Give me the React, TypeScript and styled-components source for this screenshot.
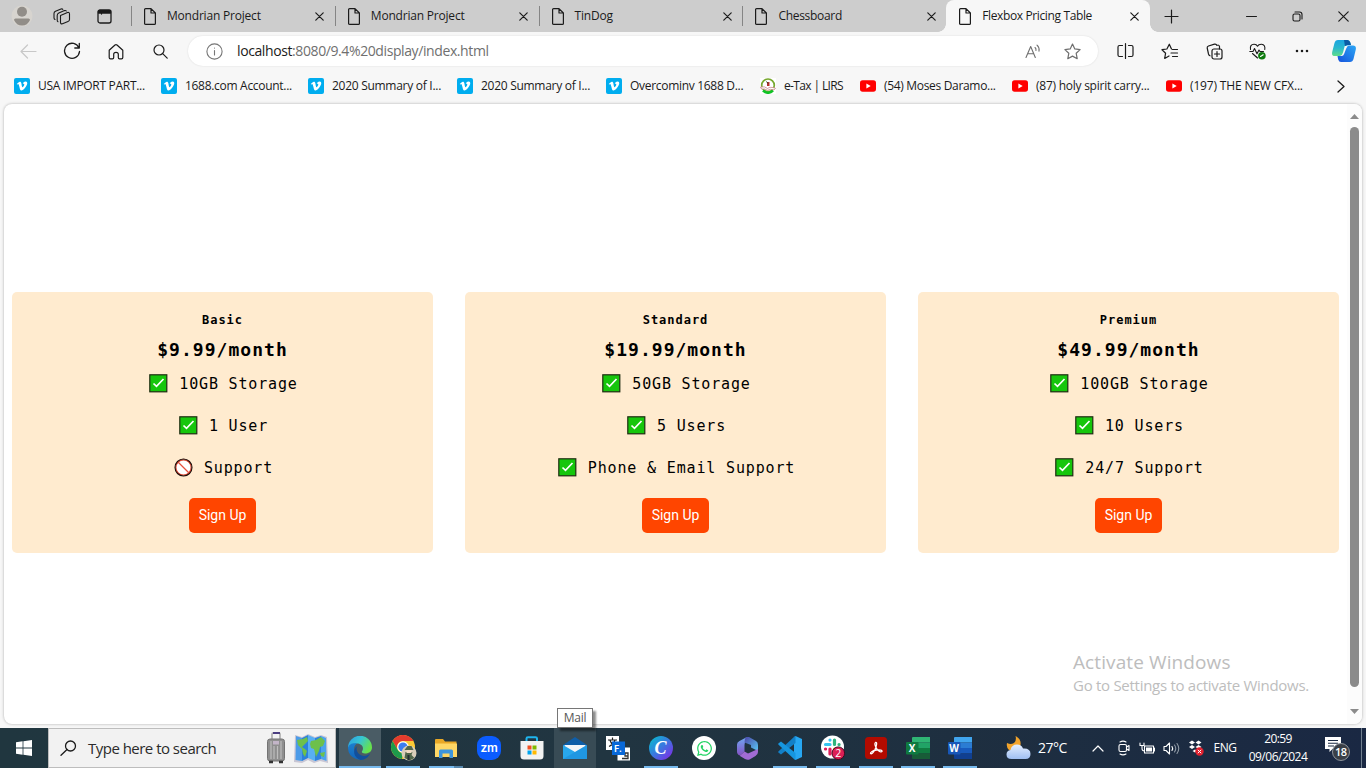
import React from "react";
import styled, { createGlobalStyle, css } from "styled-components";
import { FaVimeoV, FaWhatsapp } from "react-icons/fa";

const ui = `"Open Sans", "Noto Sans", sans-serif`;
const mono = `"DejaVu Sans Mono", "Liberation Mono", monospace`;

const GlobalStyle = createGlobalStyle`
  * { box-sizing: border-box; }
  body { margin: 0; background: #f7f7f7; font-family: ${ui}; color: #1b1b1b; overflow: hidden; }
  svg { display: block; flex: none; }
`;

const Desktop = styled.div`
  width: 1366px;
  height: 768px;
  display: flex;
  flex-direction: column;
  position: relative;
  overflow: hidden;
`;

const Label = styled.span<{ $size?: number; $track?: number; $color?: string; $lh?: number }>`
  font-size: ${(p) => p.$size ?? 12}px;
  letter-spacing: ${(p) => p.$track ?? -0.3}px;
  color: ${(p) => p.$color ?? "#1b1b1b"};
  white-space: nowrap;
  line-height: ${(p) => p.$lh ?? 18}px;
`;

const Cell = styled.div<{ $w: number }>`
  width: ${(p) => p.$w}px;
  flex: none;
  display: flex;
  align-items: center;
  justify-content: center;
`;

/* ---------- tab strip ---------- */

const TabStrip = styled.div`
  height: 32px;
  flex: none;
  display: flex;
  background: #cdcdcd;
`;

const StripLead = styled.div`
  width: 131px;
  display: flex;
  align-items: center;
  padding-left: 2px;
`;

const activeTab = css`
  background: #f7f7f7;
  border-radius: 8px 8px 0 0;
  &::before, &::after {
    content: "";
    position: absolute;
    bottom: 0;
    width: 8px;
    height: 8px;
  }
  &::before { left: -8px; background: radial-gradient(circle at 0 0, transparent 7.5px, #f7f7f7 8px); }
  &::after { right: -8px; background: radial-gradient(circle at 100% 0, transparent 7.5px, #f7f7f7 8px); }
`;

const TabBox = styled.div<{ $active?: boolean }>`
  width: 203.8px;
  position: relative;
  display: flex;
  align-items: center;
  padding: 0 8px 0 13px;
  ${(p) => p.$active && activeTab}
`;

const TabDivider = styled.i`
  position: absolute;
  left: 0;
  top: 6px;
  width: 1px;
  height: 20px;
  background: #858585;
`;

const TabTitle = styled(Label)`
  flex: 1;
  padding-left: 11px;
`;

const WindowControls = styled.div`
  margin-left: auto;
  display: flex;
`;

/* ---------- toolbar ---------- */

const Toolbar = styled.div`
  height: 38px;
  flex: none;
  display: flex;
  align-items: center;
  padding-left: 6px;
  background: #f7f7f7;
`;

const AddressBar = styled.div`
  width: 910px;
  height: 30px;
  margin: 0 5px 0 6px;
  border-radius: 15px;
  background: #fff;
  box-shadow: 0 0 2px rgba(0, 0, 0, 0.12);
  display: flex;
  align-items: center;
  padding: 0 4px 0 18px;
`;

const Url = styled(Label)`
  flex: 1;
  padding-left: 14px;
  b { font-weight: 400; color: #1b1b1b; }
`;

/* ---------- bookmarks ---------- */

const Bookmarks = styled.div`
  height: 32px;
  flex: none;
  display: flex;
  align-items: center;
  padding-left: 14px;
  background: #f7f7f7;
`;

const Bookmark = styled.div<{ $w: number }>`
  width: ${(p) => p.$w}px;
  display: flex;
  align-items: center;
  gap: 8px;
`;

const VimeoTile = styled.div`
  width: 16px;
  height: 16px;
  border-radius: 2px;
  background: #00adef;
  display: grid;
  place-items: center;
`;

/* ---------- page ---------- */

const Viewport = styled.div`
  height: 626px;
  flex: none;
  padding: 2px 4px 4px;
  background: #f7f7f7;
`;

const PageFrame = styled.div`
  height: 620px;
  border-radius: 8px;
  background: #fff;
  box-shadow: 0 0 3px rgba(0, 0, 0, 0.3);
  display: flex;
  overflow: hidden;
`;

const PricingContainer = styled.main`
  width: 1343px;
  padding: 17px 8px 0;
  display: flex;
  gap: 32px;
  align-items: center;
`;

const PlanCard = styled.section`
  flex: 1;
  height: 261px;
  padding: 20px;
  border-radius: 5px;
  background: #ffebcf;
  display: flex;
  flex-direction: column;
  align-items: center;
  font-family: ${mono};
  color: #000;
`;

const PlanTitle = styled.h2`
  margin: 0;
  font-size: 12px;
  line-height: 16px;
  letter-spacing: 0.97px;
`;

const PlanPrice = styled.h3`
  margin: 10px 0 10px;
  font-size: 18px;
  line-height: 24px;
  letter-spacing: 1.03px;
`;

const Features = styled.ul`
  list-style: none;
  margin: 0;
  padding: 0 0 0 2px;
  display: flex;
  flex-direction: column;
  gap: 20px;
  align-items: center;
`;

const Feature = styled.li`
  display: flex;
  align-items: center;
  gap: 11px;
  height: 22px;
  font-size: 15px;
  line-height: 20px;
  letter-spacing: 0.84px;
  white-space: nowrap;
  span { padding-top: 2px; }
`;

const SignUp = styled.button`
  margin-top: 20px;
  width: 67px;
  height: 35px;
  flex: none;
  padding: 0;
  border: 0;
  border-radius: 5px;
  background: #ff4500;
  color: #fff;
  font: 400 14px/35px Roboto, "Liberation Sans", sans-serif;
`;

const Scrollbar = styled.div`
  width: 15px;
  background: #fcfcfc;
  display: flex;
  flex-direction: column;
  align-items: center;
  padding: 10px 1px 10px 0;
`;

const Thumb = styled.div`
  width: 9px;
  height: 560px;
  margin: 8px 0 22px;
  flex: none;
  border-radius: 5px;
  background: #8b8b8b;
`;

const Watermark = styled.div`
  position: absolute;
  left: 1073px;
  top: 649px;
  display: flex;
  flex-direction: column;
`;

const MailTip = styled.div`
  position: absolute;
  left: 557px;
  top: 708px;
  width: 36px;
  height: 20px;
  border: 1px solid #767676;
  background: #fff;
  box-shadow: 3px 3px 2px rgba(0, 0, 0, 0.45);
  display: grid;
  place-items: center;
`;

/* ---------- taskbar ---------- */

const Taskbar = styled.div`
  height: 40px;
  flex: none;
  display: flex;
  background: linear-gradient(90deg, #20363f 0%, #213541 45%, #1e2f40 70%, #1a2843 100%);
`;

const SearchBox = styled.div`
  width: 288px;
  height: 40px;
  border: 1px solid #bdbdbd;
  background: #f2f2f2;
  display: flex;
  align-items: center;
  padding: 0 7px 0 11px;
`;

const SearchText = styled(Label)`
  flex: 1;
  padding-left: 11px;
`;

const Apps = styled.div`
  display: flex;
  padding-left: 3px;
`;

const AppButton = styled.div<{ $bg?: string; $line?: "full" | "open" | "split"; $w?: number }>`
  width: ${(p) => p.$w ?? 43}px;
  height: 40px;
  display: flex;
  align-items: center;
  justify-content: center;
  background: ${(p) => p.$bg ?? "transparent"};
  background-clip: content-box;
  padding-right: 1px;
  position: relative;
  ${(p) =>
    p.$line &&
    css`
      &::after {
        content: "";
        position: absolute;
        bottom: 0;
        left: ${p.$line === "full" ? 0 : 4}px;
        width: ${p.$line === "full" ? 42 : 34}px;
        height: 2px;
        background: ${p.$line === "split" ? "linear-gradient(90deg,#76b9ed 25px,#5788ad 25px)" : "#76b9ed"};
      }
    `}
`;

const Tray = styled.div`
  margin-left: auto;
  width: 366px;
  display: flex;
  align-items: center;
`;

const Clock = styled.div`
  width: 84px;
  display: flex;
  flex-direction: column;
  align-items: center;
`;

const ShowDesktop = styled.div`
  margin-left: auto;
  width: 5px;
  height: 40px;
  border-left: 1px solid #71808f;
`;

/* ---------- line icons ---------- */

type LineProps = { w: number; h?: number; color?: string; sw?: number; children: React.ReactNode };

const Line = ({ w, h = w, color = "#1b1b1b", sw = 1.2, children }: LineProps) => (
  <svg width={w} height={h} viewBox={`0 0 ${w} ${h}`} fill="none" stroke={color} strokeWidth={sw} strokeLinecap="round" strokeLinejoin="round">
    {children}
  </svg>
);

const CloseMark = ({ size = 9 }: { size?: number }) => (
  <Line w={size}><path d={`M.8.8 ${size - 0.8} ${size - 0.8}M${size - 0.8}.8.8 ${size - 0.8}`} /></Line>
);

const PageIcon = () => (
  <Line w={12} h={17} sw={1.2}>
    <path d="M.6 1.600Q.6.6 1.600.6H7L11.400 5V15.400Q11.400 16.400 10.400 16.400H1.600Q.6 16.400.6 15.400ZM7 .6V5H11.400" />
  </Line>
);

const Avatar = () => (
  <svg width="22" height="22" viewBox="0 0 22 22">
    <circle cx="11" cy="11" r="10.5" fill="#d7d4cf" />
    <circle cx="11" cy="6.800" r="5" fill="#918d88" />
    <path d="M3 15Q3 13.500 4.500 13.500H17.500Q19 13.500 19 15Q16.500 20.500 11 20.500T3 15" fill="#918d88" />
  </svg>
);

const WorkspacesIcon = () => (
  <Line w={18} h={17} sw={1.1}>
    <path d="M7.500 7.500 14.500 4.500Q16.500 4 16.500 6V11.500Q16.500 13 15 13.500L9.500 15.800Q7.500 16.300 7.500 14.500V8.500ZM5 13.800Q4.200 13.500 4.200 12V7.500Q4.200 5.800 5.800 5L11.500 2.600Q12.800 2.200 13.300 3M2 11.500Q1 11 1 9.700V5.500Q1 4 2.500 3.300L8 1Q9.300.7 9.800 1.300" />
  </Line>
);

const TabActionsIcon = () => (
  <Line w={15} h={15} sw={1.3}>
    <rect x="1" y="1" width="13" height="13" rx="2" />
    <path d="M1.500 1.700H13.500V4H1.500ZM4.500 4V5" fill="#1b1b1b" />
  </Line>
);

const BackIcon = () => (
  <Line w={17} h={15} color="#c8c8c8"><path d="M16 7.500H1.200M7.500 1 1 7.500 7.500 14" /></Line>
);

const ReloadIcon = () => (
  <Line w={18} sw={1.3}>
    <path d="M16 6A7.500 7.500 0 1 0 16.500 9.500M16.300 1.500V6H11.800" />
  </Line>
);

const HomeIcon = () => (
  <Line w={16} h={17} sw={1.2}>
    <path d="M1.200 7.300 7 2Q8 1.200 9 2L14.800 7.300V14.500Q14.800 15.800 13.500 15.800H11.500Q10.300 15.800 10.300 14.500V11.300Q10.300 9.300 8 9.300T5.700 11.300V14.500Q5.700 15.800 4.500 15.800H2.500Q1.200 15.800 1.200 14.500Z" />
  </Line>
);

const SearchIcon = () => (
  <Line w={15} sw={1.2}><circle cx="6" cy="6" r="5" /><path d="M9.700 9.700 14.200 14.200" /></Line>
);

const InfoIcon = () => (
  <Line w={17} color="#767676" sw={1.1}>
    <circle cx="8.500" cy="8.500" r="7.600" /><path d="M8.500 7.500V12M8.500 5V5.100" />
  </Line>
);

const ReadAloudIcon = () => (
  <Line w={17} h={15} color="#6f6f6f" sw={1.1}>
    <path d="M1 13.500 5.700 2.500 10.300 13.500M2.700 9.800H8.700M10 3.500Q11.300 4.600 11 6.500M12 1.200Q14.700 3.500 14 7.200" />
  </Line>
);

const StarIcon = () => (
  <Line w={17} h={17} color="#6f6f6f" sw={1.2}>
    <path d="M8.500 1 10.800 5.900 16.100 6.600 12.200 10.300 13.200 15.700 8.500 13.100 3.800 15.700 4.800 10.300.9 6.600 6.200 5.900Z" />
  </Line>
);

const SplitIcon = () => (
  <Line w={17} h={16} sw={1.2}>
    <path d="M8.500 .6V15.400M5.500 2.500H2.500Q1 2.500 1 4V12Q1 13.500 2.500 13.500H5.500M11.500 2.500H14.500Q16 2.500 16 4V12Q16 13.500 14.500 13.500H11.500" />
  </Line>
);

const FavoritesIcon = () => (
  <Line w={18} h={17} sw={1.2}>
    <path d="M10.500 6 8.300 1.200 5.900 6 1 6.700 4.600 10.200 3.700 15.400 8 13M11.500 6.500H16.500M10 10H16.500M11.500 13.500H16.500" />
  </Line>
);

const CollectionsIcon = () => (
  <Line w={17} h={17} sw={1.2}>
    <rect x="6" y="6" width="10" height="10" rx="2" />
    <path d="M11 8.500V13.500M8.500 11H13.500M13.500 6V3.500Q13.300 2.300 12 2M4 12.800Q3 12.500 2.500 11L1.200 5Q1 3.500 2.500 3L8.500 1.100Q10.300.7 11 2.500" />
  </Line>
);

const EssentialsIcon = () => (
  <Line w={18} h={17} sw={1.1}>
    <path d="M8.500 15 7 13.500M1.500 6.500Q.7 1.500 5 1.200 7.500 1.100 8.500 3.200 9.500 1.100 12.500 1.200 16.500 1.700 15.800 6.500M.8 8.500H4L5.500 5.500 8 10.800 10 7 11 8.500H14.500M3.500 10.500 8.500 15" />
    <circle cx="12.900" cy="12.800" r="3.800" fill="#107c10" stroke="none" />
    <path d="M11.500 13.500 14.200 11.800" stroke="#fff" />
  </Line>
);

const CopilotIcon = () => (
  <svg width="24" height="22" viewBox="0 0 24 22">
    <defs>
      <linearGradient id="cpl" x1="0" y1="0" x2="0" y2="1"><stop stopColor="#1ba4e0" /><stop offset=".5" stopColor="#2ab7cd" /><stop offset="1" stopColor="#5fdc8a" /></linearGradient>
      <linearGradient id="cpr" x1="1" y1="0" x2="0" y2="1"><stop stopColor="#2ba7f5" /><stop offset="1" stopColor="#1652dc" /></linearGradient>
    </defs>
    <path d="M6 0H15.500Q17.500 0 18.300 2.500L19 5H16Q14 5 13.300 7.500L11.500 13.500Q10.700 16 8 16H3Q-.7 16 .2 12L2.500 3Q3.300 0 6 0Z" fill="url(#cpl)" />
    <path d="M12 0H15.500Q17.500 0 18.300 2.500L19 5H15.500Q13.500 5 13 6.500Z" fill="#0b5aa5" />
    <path d="M18 22H9Q7 22 6.200 19.500L5.500 16H8Q10.500 16 11.300 13.500L13 8Q13.800 5.500 16 5.500H21Q24.500 5.500 23.800 9.500L21.500 19Q20.700 22 18 22Z" fill="url(#cpr)" />
    <path d="M12.700 6H15.700Q14.500 7.500 13.800 9.500L12.300 13.500Q11.700 15.500 10 16H8Q10.500 15 11 12.500Z" fill="#f7f7f7" />
  </svg>
);

const YoutubeIcon = () => (
  <svg width="16" height="16" viewBox="0 0 16 16">
    <rect x="0" y="2.300" width="16" height="11.400" rx="2.600" fill="#f00" />
    <path d="M6.400 5.600 10.700 8 6.400 10.400Z" fill="#fff" />
  </svg>
);

const LirsIcon = () => (
  <svg width="16" height="16" viewBox="0 0 16 16">
    <rect width="16" height="16" fill="#fff" />
    <circle cx="8" cy="7.300" r="6.300" fill="#fff" stroke="#77a82e" strokeWidth="1.700" />
    <path d="M3 12.500Q8 17 13 12.500" stroke="#10c226" strokeWidth="2.500" fill="none" />
    <path d="M.5 9Q5 8 7.500 10.500 10 8.300 15.500 10.300L14 12Q10 10.500 7.500 12.300 5 10.500 1.500 11Z" fill="#fff" stroke="#c2757b" strokeWidth=".7" />
    <path d="M7 4H9.500V8H7Z" fill="#b8322c" /><path d="M6.500 3.500 8 5.500" stroke="#242" />
  </svg>
);

/* ---------- plan marks ---------- */

const CheckMark = () => (
  <svg width="19" height="19" viewBox="0 0 19 19">
    <rect x=".8" y=".8" width="17" height="17" fill="#16c60c" stroke="#1f2c12" strokeWidth="1.200" />
    <path d="M4.500 9.500 7.500 12.400 14.500 5" fill="none" stroke="#fff" strokeWidth="1.700" />
  </svg>
);

const NoMark = () => (
  <svg width="19" height="19" viewBox="0 0 19 19">
    <circle cx="9.500" cy="9.500" r="7.700" fill="#fff" stroke="#d8412c" strokeWidth="1.300" />
    <circle cx="9.500" cy="9.500" r="8.500" fill="none" stroke="#1b0d0a" strokeWidth="1.100" />
    <path d="M4 4 15 15" stroke="#e8503c" strokeWidth="1.300" />
  </svg>
);

/* ---------- taskbar icons ---------- */

const WindowsIcon = () => (
  <svg width="16" height="16" viewBox="0 0 16 16" fill="#fff">
    <path d="M0 2.200 6.600 1.300V7.600H0ZM7.400 1.200 16 0V7.600H7.400ZM0 8.400H6.600V14.700L0 13.800ZM7.400 8.400H16V16L7.400 14.800Z" />
  </svg>
);

const LuggageIcon = () => (
  <svg width="18" height="32" viewBox="0 0 18 32">
    <path d="M5 8V2Q5 1 6 1H12Q13 1 13 2V8" fill="none" stroke="#a7a7a7" strokeWidth="1.500" />
    <path d="M6 1H13" stroke="#4b3d80" strokeWidth="2" />
    <rect x=".5" y="7" width="17" height="22" rx="2.500" fill="#8f8f8f" stroke="#747474" />
    <path d="M4 9V27M7 14V27M10.500 14V27M14 9V27" stroke="#bdbdbd" strokeWidth="1.200" />
    <rect x="6" y="9" width="6" height="3.500" fill="#c3b5c8" />
    <path d="M2 30H6M12 30H16" stroke="#333" strokeWidth="2.500" />
  </svg>
);

const MapIcon = () => (
  <svg width="34" height="31" viewBox="0 0 34 31">
    <path d="M1 2 8 4 14 1 21 4 27 2 33 4 34 30 26 28 20 30 14 27 8 30 0 29Z" fill="#c8c6d4" />
    <path d="M2 3 8 5V28L1.500 27Z" fill="#4b9be8" /><path d="M8 5 14 2V25L8 28Z" fill="#2c81dc" />
    <path d="M14 2 21 5V28L14 25Z" fill="#58b0f2" /><path d="M21 5 27 3V26L21 28Z" fill="#2f83dd" /><path d="M27 3 32 5 32.500 28 27 26Z" fill="#4ba3ee" />
    <path d="M3 7 9 6 13 4 14 8 11 11 8 14 11 16 13 18 11 24 9 21 8 16 4 12ZM17 8 22 7 27 4 31 8 29 13 26 14 25 18 22 24 20 16 17 15 16 11ZM26 20 31 19 30 24 27 23Z" fill="#6dc04b" />
  </svg>
);

const EdgeIcon = () => (
  <svg width="24" height="24" viewBox="0 0 24 24">
    <defs>
      <linearGradient id="eg1" x1="0" y1="0" x2="1" y2=".5"><stop stopColor="#2c9be4" /><stop offset=".5" stopColor="#36c4d4" /><stop offset="1" stopColor="#67e24c" /></linearGradient>
      <linearGradient id="eg2" x1="0" y1="0" x2="0" y2="1"><stop stopColor="#1b7fd0" /><stop offset="1" stopColor="#1266b9" /></linearGradient>
    </defs>
    <path d="M0 12A12 12 0 0 1 24 11.500C24 16 20 17.500 17 17.500 14.500 17.500 13.500 16.300 14 15.300 16.500 12 14 7.500 9 7.500 4 7.500 1 10.500 0 12Z" fill="url(#eg1)" />
    <path d="M0 12C.5 7.500 6 6.500 9 7.500 6.500 9 5.500 12 6.500 15 8 19.500 13 22 18 21L20.500 20A12 12 0 0 1 0 12Z" fill="url(#eg2)" />
    <path d="M9.500 10C7.500 12 8.500 17 13 19.300 16.500 20.800 19.500 19.500 22 17.500 21 20.500 17 24 12.500 24 5.500 21.500 4 13.500 9.500 10Z" fill="#124f9b" />
  </svg>
);

const ChromeIcon = () => (
  <svg width="27" height="26" viewBox="0 0 27 26">
    <circle cx="13" cy="12" r="12" fill="#fcc934" />
    <path d="M2.600 6A12 12 0 0 1 23.400 6H13A6 6 0 0 0 7.800 15Z" fill="#e33b2e" />
    <path d="M2.600 6 7.800 15A6 6 0 0 0 13 18L12 24A12 12 0 0 1 2.600 6" fill="#1e9a4b" />
    <circle cx="13" cy="12" r="5.800" fill="#fff" /><circle cx="13" cy="12" r="4.600" fill="#3c7df0" />
    <circle cx="19" cy="18" r="7.500" fill="#d8cdb9" />
    <path d="M14.500 15 17.500 11H21.500L23.500 15ZM15.500 17H22.500L21.500 20 24.500 23 19.500 25.500 14.500 23Z" fill="#50664a" />
    <path d="M16.500 15H21.500V18H16.500Z" fill="#f0d9c2" /><path d="M17.500 20H19.500V25H17.500Z" fill="#222f35" />
  </svg>
);

const FolderIcon = () => (
  <svg width="22" height="19" viewBox="0 0 22 19">
    <path d="M0 1Q0 0 1 0H8L10 2.500H21.500V18H0Z" fill="#e9a826" /><path d="M0 4.500H22V18H0Z" fill="#ffd765" />
    <path d="M4 19V12Q4 10.500 5.500 10.500H16.500Q18 10.500 18 12V19H14.500V14.500H7.500V19Z" fill="#3d95dc" />
  </svg>
);

const ZoomIcon = () => (
  <svg width="24" height="24" viewBox="0 0 24 24">
    <rect width="24" height="24" rx="9" fill="#0b5cff" />
    <text x="12" y="15.700" textAnchor="middle" fontFamily="Inter" fontWeight="600" fontSize="12" letterSpacing="-.2" fill="#fff">zm</text>
  </svg>
);

const StoreIcon = () => (
  <svg width="24" height="24" viewBox="0 0 24 24">
    <path d="M6.500 6V2.500Q6.500 1.200 8 1.200H15.500Q17 1.200 17 2.500V6" fill="none" stroke="#1fb5ee" strokeWidth="2" />
    <path d="M.5 5H23.500V20Q23.500 23.500 20 23.500H4Q.5 23.500.5 20Z" fill="#f2f2f2" />
    <path d="M7.500 9.500H11.500V13.500H7.500Z" fill="#f25022" /><path d="M12.500 9.500H16.500V13.500H12.500Z" fill="#7fba00" />
    <path d="M7.500 14.500H11.500V18.500H7.500Z" fill="#00a4ef" /><path d="M12.500 14.500H16.500V18.500H12.500Z" fill="#ffb900" />
  </svg>
);

const MailIcon = () => (
  <svg width="24" height="22" viewBox="0 0 24 22">
    <path d="M0 8 12 0 24 8V12H0Z" fill="#0f5ea8" /><path d="M1.500 8H22.500V14L12 18 1.500 14Z" fill="#f4f6f8" />
    <path d="M0 8 12 15 24 8V22H0Z" fill="#29a7ec" /><path d="M0 22 24 8V22Z" fill="#1685d8" opacity=".45" />
  </svg>
);

const TranslateIcon = () => (
  <svg width="24" height="25" viewBox="0 0 24 25">
    <rect width="13" height="14" fill="#fff" /><path d="M2 4H11M6.500 1.500V4M9 4Q8 8 3 10.500M4 4Q5 8 9 9.500" stroke="#222" strokeWidth="1.200" fill="none" />
    <rect x="11.500" y="11.500" width="12.500" height="13" fill="#fff" /><path d="M17 17H22V22.500H16M19 17V20H22" stroke="#333" fill="none" strokeWidth="1.300" />
    <rect x="6" y="5.500" width="13" height="13.500" fill="#0868d8" />
    <text x="12" y="15.500" fontFamily="Inter" fontWeight="700" fontSize="8.500" fill="#fff" textAnchor="middle">F.</text>
  </svg>
);

const CanvaIcon = () => (
  <svg width="24" height="24" viewBox="0 0 24 24">
    <defs><linearGradient id="cv" x1="0" y1="0" x2="1" y2="1"><stop stopColor="#00c4cc" /><stop offset=".5" stopColor="#3b76e0" /><stop offset="1" stopColor="#8a20e6" /></linearGradient></defs>
    <circle cx="12" cy="12" r="12" fill="url(#cv)" />
    <text x="11.500" y="18" textAnchor="middle" fontFamily="Liberation Serif" fontStyle="italic" fontWeight="700" fontSize="18" fill="#fff">C</text>
  </svg>
);

const WhatsappTile = styled.div`
  width: 24px;
  height: 24px;
  border-radius: 50%;
  background: #fff;
  display: grid;
  place-items: center;
`;

const M365Icon = () => (
  <svg width="21" height="23" viewBox="0 0 21 23">
    <defs>
      <linearGradient id="m1" x1="0" y1="0" x2="0" y2="1"><stop stopColor="#6fa9f2" /><stop offset="1" stopColor="#8652c5" /></linearGradient>
      <linearGradient id="m2" x1="0" y1="0" x2="1" y2="1"><stop stopColor="#4c46a8" /><stop offset="1" stopColor="#5ac8f4" /></linearGradient>
    </defs>
    <path d="M10 0 12.500 1.500Q7.500 3.500 7.500 8V14.500L3 18.500Q0 17.500 0 14.500V7.500Q0 5 2.500 4Z" fill="url(#m1)" />
    <path d="M9 0H12L19 4Q21 5 21 8V14L14 10.500V8L7.500 5.500Q7.500 1.500 9 0Z" fill="url(#m2)" />
    <path d="M3 18.500 7.500 14.500 11 16.500 21 12V15Q21 17.500 18.500 19L13 22.300Q10.500 23.500 8 22L3 19Z" fill="#a16bd5" />
  </svg>
);

const CodeIcon = () => (
  <svg width="24" height="24" viewBox="0 0 24 24">
    <path d="M17.500 0 24 3V21L17.500 24 16 22.500V1.500Z" fill="#27a7f2" />
    <path d="M17.500 0V7L3 18.500.3 16.500V15.500L16.500.4Z" fill="#1280c8" />
    <path d="M17.500 24V17L3 5.500.3 7.500V8.500L16.500 23.600Z" fill="#1696df" />
  </svg>
);

const SlackIcon = () => (
  <svg width="24" height="26" viewBox="0 0 24 26">
    <circle cx="11.500" cy="12" r="11.500" fill="#fff" />
    <g strokeWidth="3.200" strokeLinecap="round">
      <path d="M4.500 9.500H9M9 5V5.100" stroke="#36c5f0" /><path d="M13.500 5V9.500M18 9.500H18.100" stroke="#2eb67d" />
      <path d="M4.500 14H4.600M9 14V19" stroke="#e01e5a" /><path d="M13.500 14H18.500M13.500 18.500V18.600" stroke="#ecb22e" />
    </g>
    <circle cx="17.300" cy="18.200" r="6.300" fill="#dc1f55" stroke="#3a0c20" />
    <text x="17.300" y="22.200" textAnchor="middle" fontFamily="Open Sans" fontSize="10.500" fill="#fff">2</text>
  </svg>
);

const AcrobatIcon = () => (
  <svg width="22" height="22" viewBox="0 0 22 22">
    <rect width="22" height="22" rx="3.500" fill="#b30b00" />
    <path d="M10.500 5.500C12.500 5 11.500 9 10 12.500 8.500 15.500 6.500 17.500 5.500 16.500 5 15.500 8 13.500 11.500 13 15 12.500 17.500 13.200 17 14.500 16 16 12.500 13.500 11 10.500 10 8.500 9.300 6 10.500 5.500Z" fill="none" stroke="#fff" strokeWidth="1.300" />
  </svg>
);

const OfficeIcon = ({ letter, shades }: { letter: string; shades: string[] }) => (
  <svg width="24" height="22" viewBox="0 0 24 22">
    <path d="M6 1Q6 0 7 0H24V5.500H6Z" fill={shades[0]} /><path d="M6 5.500H24V11H6Z" fill={shades[1]} />
    <path d="M6 11H24V16.500H6Z" fill={shades[2]} /><path d="M6 16.500H24V22H7Q6 22 6 21Z" fill={shades[3]} />
    <rect y="5" width="12.500" height="12.500" rx="1" fill={shades[4]} />
    <text x="6.200" y="15" textAnchor="middle" fontFamily="Open Sans" fontWeight="700" fontSize="10" fill="#fff">{letter}</text>
  </svg>
);

const WeatherIcon = () => (
  <svg width="25" height="24" viewBox="0 0 25 24">
    <defs><linearGradient id="cl" x1="0" y1="0" x2="0" y2="1"><stop stopColor="#e4efff" /><stop offset="1" stopColor="#9fbff2" /></linearGradient></defs>
    <path d="M9.500 0Q15.500 3 14.500 9L12 14H3Q0 11 1 7 6 9.500 9 6 10.500 3 9.500 0Z" fill="#f2a42c" />
    <path d="M5.500 23Q.5 23 .5 18.500.5 14.500 4.500 14 5.500 8.500 11 8.500 15.500 8.500 17 12.500 24.500 12 24.500 18 24.500 23 19.500 23Z" fill="url(#cl)" />
  </svg>
);

const NotificationIcon = () => (
  <svg width="26" height="26" viewBox="0 0 26 26">
    <path d="M0 2H16V14H7.500L4.500 17V14H0Z" fill="#fff" />
    <path d="M3 5.500H13M3 8.200H13M3 11H9" stroke="#1b2a43" strokeWidth="1.100" />
    <circle cx="16" cy="17" r="8.500" fill="#3a3f47" stroke="#8e949b" />
    <text x="15.800" y="21" textAnchor="middle" fontFamily="Open Sans" fontWeight="600" fontSize="11" letterSpacing="-.5" fill="#fff">18</text>
  </svg>
);

/* ---------- data ---------- */

const tabs = [
  { title: "Mondrian Project", track: -0.2 },
  { title: "Mondrian Project", track: -0.2 },
  { title: "TinDog", track: -0.2 },
  { title: "Chessboard", track: -0.3 },
  { title: "Flexbox Pricing Table", track: -0.37, active: true },
];

const bookmarks = [
  { icon: "v", text: "USA IMPORT PART...", w: 147, track: -0.3 },
  { icon: "v", text: "1688.com Account...", w: 147, track: -0.3 },
  { icon: "v", text: "2020 Summary of I...", w: 149, track: -0.28 },
  { icon: "v", text: "2020 Summary of I...", w: 149, track: -0.28 },
  { icon: "v", text: "Overcominv 1688 D...", w: 154, track: -0.3 },
  { icon: "l", text: "e-Tax | LIRS", w: 100, track: -0.63 },
  { icon: "y", text: "(54) Moses Daramo...", w: 152, track: -0.32 },
  { icon: "y", text: "(87) holy spirit carry...", w: 154, track: -0.25 },
  { icon: "y", text: "(197) THE NEW CFX...", w: 158, track: -0.16 },
];

const plans = [
  { name: "Basic", price: "$9.99/month", features: ["10GB Storage", "1 User", "!Support"] },
  { name: "Standard", price: "$19.99/month", features: ["50GB Storage", "5 Users", "Phone & Email Support"] },
  { name: "Premium", price: "$49.99/month", features: ["100GB Storage", "10 Users", "24/7 Support"] },
];

const BookmarkIcon = ({ kind }: { kind: string }) => {
  if (kind === "v") return <VimeoTile><FaVimeoV size={12} color="#fff" /></VimeoTile>;
  return kind === "l" ? <LirsIcon /> : <YoutubeIcon />;
};

export default function App() {
  return (
    <Desktop>
      <GlobalStyle />
      <TabStrip>
        <StripLead>
          <Cell $w={40}><Avatar /></Cell>
          <Cell $w={40}><WorkspacesIcon /></Cell>
          <Cell $w={44}><TabActionsIcon /></Cell>
        </StripLead>
        {tabs.map((t, i) => (
          <TabBox key={i} $active={t.active}>
            {!t.active && <TabDivider />}
            <PageIcon />
            <TabTitle $track={t.track}>{t.title}</TabTitle>
            <Cell $w={14}><CloseMark /></Cell>
          </TabBox>
        ))}
        <Cell $w={43}><Line w={15} sw={1.2}><path d="M7.500 1V14M1 7.500H14" /></Line></Cell>
        <WindowControls>
          <Cell $w={46}><Line w={11} h={3} sw={1}><path d="M.5 1.500H10.500" /></Line></Cell>
          <Cell $w={46}><Line w={11} sw={1.1}><rect x="1" y="3" width="7" height="7" rx="1.500" /><path d="M3 1H7.500Q10 1 10 3.500V8" /></Line></Cell>
          <Cell $w={46}><CloseMark size={11} /></Cell>
        </WindowControls>
      </TabStrip>

      <Toolbar>
        <Cell $w={44}><BackIcon /></Cell>
        <Cell $w={44}><ReloadIcon /></Cell>
        <Cell $w={44}><HomeIcon /></Cell>
        <Cell $w={44}><SearchIcon /></Cell>
        <AddressBar>
          <InfoIcon />
          <Url $size={14} $track={-0.4} $color="#6f6f6f"><b>localhost</b>:8080/9.4%20display/index.html</Url>
          <Cell $w={36}><ReadAloudIcon /></Cell>
          <Cell $w={43}><StarIcon /></Cell>
        </AddressBar>
        <Cell $w={44}><SplitIcon /></Cell>
        <Cell $w={45}><FavoritesIcon /></Cell>
        <Cell $w={44}><CollectionsIcon /></Cell>
        <Cell $w={44}><EssentialsIcon /></Cell>
        <Cell $w={44}>
          <Line w={14} h={4} sw={2.6}><path d="M2 2V2.010M7 2V2.010M12 2V2.010" /></Line>
        </Cell>
        <Cell $w={40}><CopilotIcon /></Cell>
      </Toolbar>

      <Bookmarks>
        {bookmarks.map((b, i) => (
          <Bookmark key={i} $w={b.w}>
            <BookmarkIcon kind={b.icon} />
            <Label $track={b.track}>{b.text}</Label>
          </Bookmark>
        ))}
        <Cell $w={33}><Line w={8} h={13} sw={1.3}><path d="M1 1 7 6.500 1 12" /></Line></Cell>
      </Bookmarks>

      <Viewport>
        <PageFrame>
          <PricingContainer>
            {plans.map((p) => (
              <PlanCard key={p.name}>
                <PlanTitle>{p.name}</PlanTitle>
                <PlanPrice>{p.price}</PlanPrice>
                <Features>
                  {p.features.map((f) => (
                    <Feature key={f}>
                      {f[0] === "!" ? <NoMark /> : <CheckMark />}
                      <span>{f.replace("!", "")}</span>
                    </Feature>
                  ))}
                </Features>
                <SignUp>Sign Up</SignUp>
              </PlanCard>
            ))}
          </PricingContainer>
          <Scrollbar>
            <svg width="9" height="5" viewBox="0 0 9 5"><path d="M0 5 4.500 0 9 5Z" fill="#8b8b8b" /></svg>
            <Thumb />
            <svg width="9" height="5" viewBox="0 0 9 5"><path d="M0 0H9L4.500 5Z" fill="#8b8b8b" /></svg>
          </Scrollbar>
        </PageFrame>
      </Viewport>

      <Watermark>
        <Label $size={19} $track={0.1} $lh={26} $color="#bdbdbd">Activate Windows</Label>
        <Label $size={15} $track={-0.28} $lh={20} $color="#bdbdbd">Go to Settings to activate Windows.</Label>
      </Watermark>

      <Taskbar>
        <Cell $w={48}><WindowsIcon /></Cell>
        <SearchBox>
          <Line w={17} h={16} sw={1.3}><circle cx="10.500" cy="6" r="5" /><path d="M7 9.500 1 15.200" /></Line>
          <SearchText $size={15} $track={-0.52} $color="#2b2b2b">Type here to search</SearchText>
          <LuggageIcon />
          <Cell $w={9} />
          <MapIcon />
        </SearchBox>
        <Apps>
          <AppButton $bg="#4a5c65" $line="full"><EdgeIcon /></AppButton>
          <AppButton $line="open"><ChromeIcon /></AppButton>
          <AppButton $line="split"><FolderIcon /></AppButton>
          <AppButton><ZoomIcon /></AppButton>
          <AppButton><StoreIcon /></AppButton>
          <AppButton $bg="#384b55"><MailIcon /></AppButton>
          <AppButton><TranslateIcon /></AppButton>
          <AppButton $line="open"><CanvaIcon /></AppButton>
          <AppButton><WhatsappTile><FaWhatsapp size={17} color="#25d366" /></WhatsappTile></AppButton>
          <AppButton><M365Icon /></AppButton>
          <AppButton $line="open"><CodeIcon /></AppButton>
          <AppButton $line="open"><SlackIcon /></AppButton>
          <AppButton $line="open" $w={42}><AcrobatIcon /></AppButton>
          <AppButton $line="open" $w={42}><OfficeIcon letter="X" shades={["#2fb574", "#21a366", "#107c41", "#185c37", "#0f7a40"]} /></AppButton>
          <AppButton $line="open" $w={42}><OfficeIcon letter="W" shades={["#41a5ee", "#2b7cd3", "#185abd", "#103f91", "#1857b8"]} /></AppButton>
        </Apps>
        <Tray>
          <Cell $w={36}><WeatherIcon /></Cell>
          <Cell $w={33}><Label $size={14} $track={-0.5} $color="#fff">27°C</Label></Cell>
          <Cell $w={10} />
          <Cell $w={38}><Line w={12} h={7} color="#fff"><path d="M1 6 6 1 11 6" /></Line></Cell>
          <Cell $w={13}>
            <Line w={12} h={16} color="#fff" sw={1.1}><rect x="1" y="4.500" width="7.500" height="7" rx="1.500" /><path d="M8.500 7 11 5.500V10.500L8.500 9M2 2Q5 .3 8 2M2 14Q5 15.700 8 14" /></Line>
          </Cell>
          <Cell $w={34}>
            <Line w={16} h={13} color="#fff" sw={1.1}><path d="M5.500 4H14.500V11H5.500ZM15.500 6V9M1 1V3.500H5V1M3 3.500V6.500Q3 9 5.500 9" /><rect x="7" y="5.500" width="6" height="4" fill="#fff" stroke="none" /></Line>
          </Cell>
          <Cell $w={14}>
            <Line w={17} h={13} color="#fff" sw={1.1}><path d="M1 4.500H3L6.500 1V12L3 8.500H1Z" /><path d="M9 4.500Q10.300 6.500 9 8.500" /><path d="M11.500 3Q14 6.500 11.500 10M14 1.500Q17.500 6.500 14 11.500" stroke="#8e99a5" /></Line>
          </Cell>
          <Cell $w={36}>
            <svg width="16" height="16" viewBox="0 0 16 16">
              <path d="M4 .5 7 2.500 4 4.500 1 2.500ZM10.500.5 13.500 2.500 10.500 4.500 7.500 2.500ZM4 5 7 7 4 9 1 7ZM10.500 5 13.500 7 10.500 9 7.500 7ZM7 9.500 9.500 11 7 12.500 4.500 11Z" fill="#fff" />
              <circle cx="11.500" cy="11.500" r="4.200" fill="#e0202e" /><path d="M9.800 9.800 13.200 13.200M13.200 9.800 9.800 13.200" stroke="#fff" />
            </svg>
          </Cell>
          <Cell $w={22}><Label $track={-0.4} $color="#fff">ENG</Label></Cell>
          <Clock>
            <Label $track={-0.6} $color="#fff">20:59</Label>
            <Label $track={-0.5} $color="#fff">09/06/2024</Label>
          </Clock>
          <Cell $w={36}><NotificationIcon /></Cell>
          <ShowDesktop />
        </Tray>
      </Taskbar>

      <MailTip><Label $color="#575757" $track={-0.2}>Mail</Label></MailTip>
    </Desktop>
  );
}
